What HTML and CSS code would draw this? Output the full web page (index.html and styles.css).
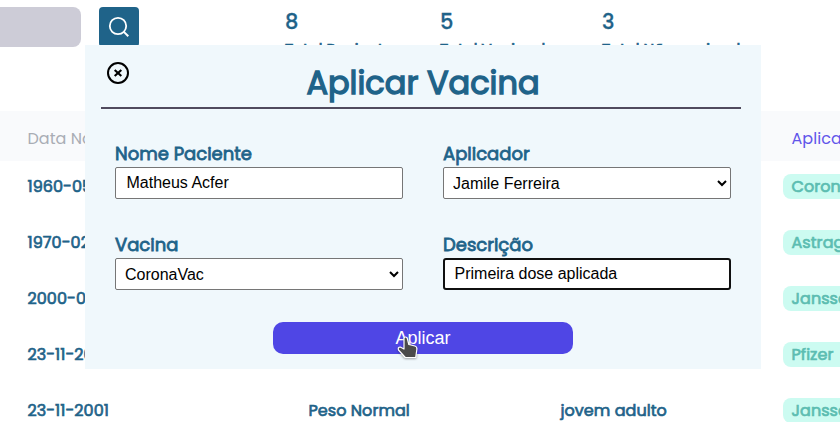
FILE: index.html
```html
<!DOCTYPE html>
<html lang="pt-BR">
<head>
<meta charset="utf-8">
<title>Aplicar Vacina</title>
<link rel="stylesheet" href="styles.css">
</head>
<body>
<header class="top">
  <div class="search-field"></div>
  <button class="search-button" aria-label="Buscar"><svg width="22" height="22" viewBox="0 0 22 22" fill="none" stroke="#fff" stroke-width="1.8"><circle cx="10" cy="10" r="8.2"/><path d="M15.6 15.6 20.3 20.3" stroke-width="2"/></svg></button>
  <div class="totals">
    <div><strong>8</strong><span>Total Pacientes</span></div>
    <div><strong>5</strong><span>Total Vacinados</span></div>
    <div><strong>3</strong><span>Total Não vacinados</span></div>
  </div>
</header>
<main class="table">
  <div class="row head"><span>Data Nascimento</span><span></span><span></span><span class="applied">Aplicada</span></div>
  <div class="row"><span>1960-05-12</span><span></span><span></span><span class="pill">CoronaVac</span></div>
  <div class="row"><span>1970-02-10</span><span></span><span></span><span class="pill">Astrageneca</span></div>
  <div class="row"><span>2000-01-10</span><span></span><span></span><span class="pill">Janssen</span></div>
  <div class="row"><span>23-11-2001</span><span></span><span></span><span class="pill">Pfizer</span></div>
  <div class="row"><span>23-11-2001</span><span>Peso Normal</span><span>jovem adulto</span><span class="pill">Janssen</span></div>
</main>
<section class="modal">
  <button class="close" aria-label="Fechar"><svg width="24" height="24" viewBox="0 0 24 24" fill="none" stroke="#000" stroke-width="2"><circle cx="12" cy="12" r="10"/><path d="M8.7 8.9 15.3 15.1M15.3 8.9 8.7 15.1" stroke-width="2.1"/></svg></button>
  <h1>Aplicar Vacina</h1>
  <form class="form">
    <div class="fields">
      <label><span>Nome Paciente</span><input type="text" value="Matheus Acfer"></label>
      <label><span>Aplicador</span><select><option>Jamile Ferreira</option></select></label>
      <label><span>Vacina</span><select><option>CoronaVac</option></select></label>
      <label><span>Descrição</span><input class="active" type="text" value="Primeira dose aplicada"></label>
    </div>
    <button class="submit" type="button">Aplicar</button>
  </form>
</section>
<svg class="pointer" width="24" height="26" viewBox="0 0 24 26"><path d="M8 2.3Q9-.1 11.2 2L12.8 8.5 19 10Q21.2 10.7 20.9 13.2L19.7 21.5H9.3L2.5 14Q1.5 11.2 4.3 11L8 13Z" fill="#4b4b4b" stroke="#fff" stroke-width="1.2" stroke-linejoin="round"/></svg>
</body>
</html>
```

FILE: styles.css
```css
* { box-sizing: border-box; }
body {
  margin: 0;
  width: 840px;
  height: 422px;
  overflow: hidden;
  position: relative;
  background: #fff;
  color: #1f6389;
  font-family: Poppins, Inter, sans-serif;
}
button { padding: 0; border: 0; }
.top { display: flex; height: 111px; padding-top: 7px; }
.search-field { width: 81px; height: 40px; background: #cdccd7; border-radius: 0 8px 8px 0; }
.search-button {
  width: 40px; height: 40px; margin-left: 18px; border-radius: 4px;
  background: #1f6389; display: grid; place-items: center;
}
.totals { display: grid; grid-template-columns: 155px 162px 190px; margin-left: 146px; white-space: nowrap; }
.totals strong { display: block; font-size: 21px; font-weight: 500; -webkit-text-stroke: .3px; line-height: 30px; }
.totals span { display: block; font-size: 15.2px; font-weight: 400; -webkit-text-stroke: .7px; line-height: 26px; }
.table { display: flex; flex-direction: column; gap: 6px; }
.row {
  display: grid; grid-template-columns: 281px 252px 222.5px 57px;
  align-items: center; height: 50px; padding-left: 27.5px; white-space: nowrap;
  font-size: 16px; font-weight: 400; -webkit-text-stroke: .7px; letter-spacing: .05px;
}
.head { -webkit-text-stroke: 0; background: #f9fafc; color: #a9adb5; padding-top: 4px; margin-bottom: -6px; }
.applied { color: #6155ea; padding-left: 8.5px; overflow: hidden; }
.pill {
  height: 25px; line-height: 25px; padding-left: 8.5px; overflow: hidden;
  border-radius: 8px 0 0 8px; background: #ccfbf1; color: #5cbdb1;
}
.modal {
  position: absolute; left: 85px; top: 45px; width: 676px; height: 324px;
  padding: 16px 20px 0 16px; background: #f0f8fc;
}
.close { position: absolute; left: 21px; top: 16px; width: 24px; height: 24px; background: none; }
.close svg { display: block; }
.modal h1 {
  height: 48px; margin: 0; border-bottom: 2px solid #504b5e;
  text-align: center; line-height: 44px; font-size: 32px; font-weight: 400;
  -webkit-text-stroke: 1.4px; padding-left: 4px;
}
.form { padding: 31px 10px 0 14px; }
.fields { display: grid; grid-template-columns: 288px 288px; column-gap: 40px; row-gap: 32px; }
.fields label { display: block; height: 59px; }
.fields label span { display: block; width: max-content; height: 27px; line-height: 27px; font-size: 18px; font-weight: 400; -webkit-text-stroke: .8px; }
.fields input, .fields select {
  display: block; width: 288px; height: 32px; background: #fff; color: #000;
  font: 16px "Liberation Sans", Arial, sans-serif;
  border: 1px solid #767676; border-radius: 2px; outline: none;
}
.fields input { padding: 0 10.5px 1px; }
.fields select { padding: 0 5px; }
.fields .active { border: 2px solid #101010; padding: 0 9.5px 1px; border-radius: 3px; }
.submit {
  display: block; width: 300px; height: 32px; margin: 32px 0 0 158px;
  border-radius: 10px; background: #4f46e5; color: #fff;
  font: 18px/32px "Liberation Sans", Arial, sans-serif;
}
.pointer { position: absolute; left: 396px; top: 336px; filter: drop-shadow(0 1px 1px rgba(0,0,0,.35)); }
```
